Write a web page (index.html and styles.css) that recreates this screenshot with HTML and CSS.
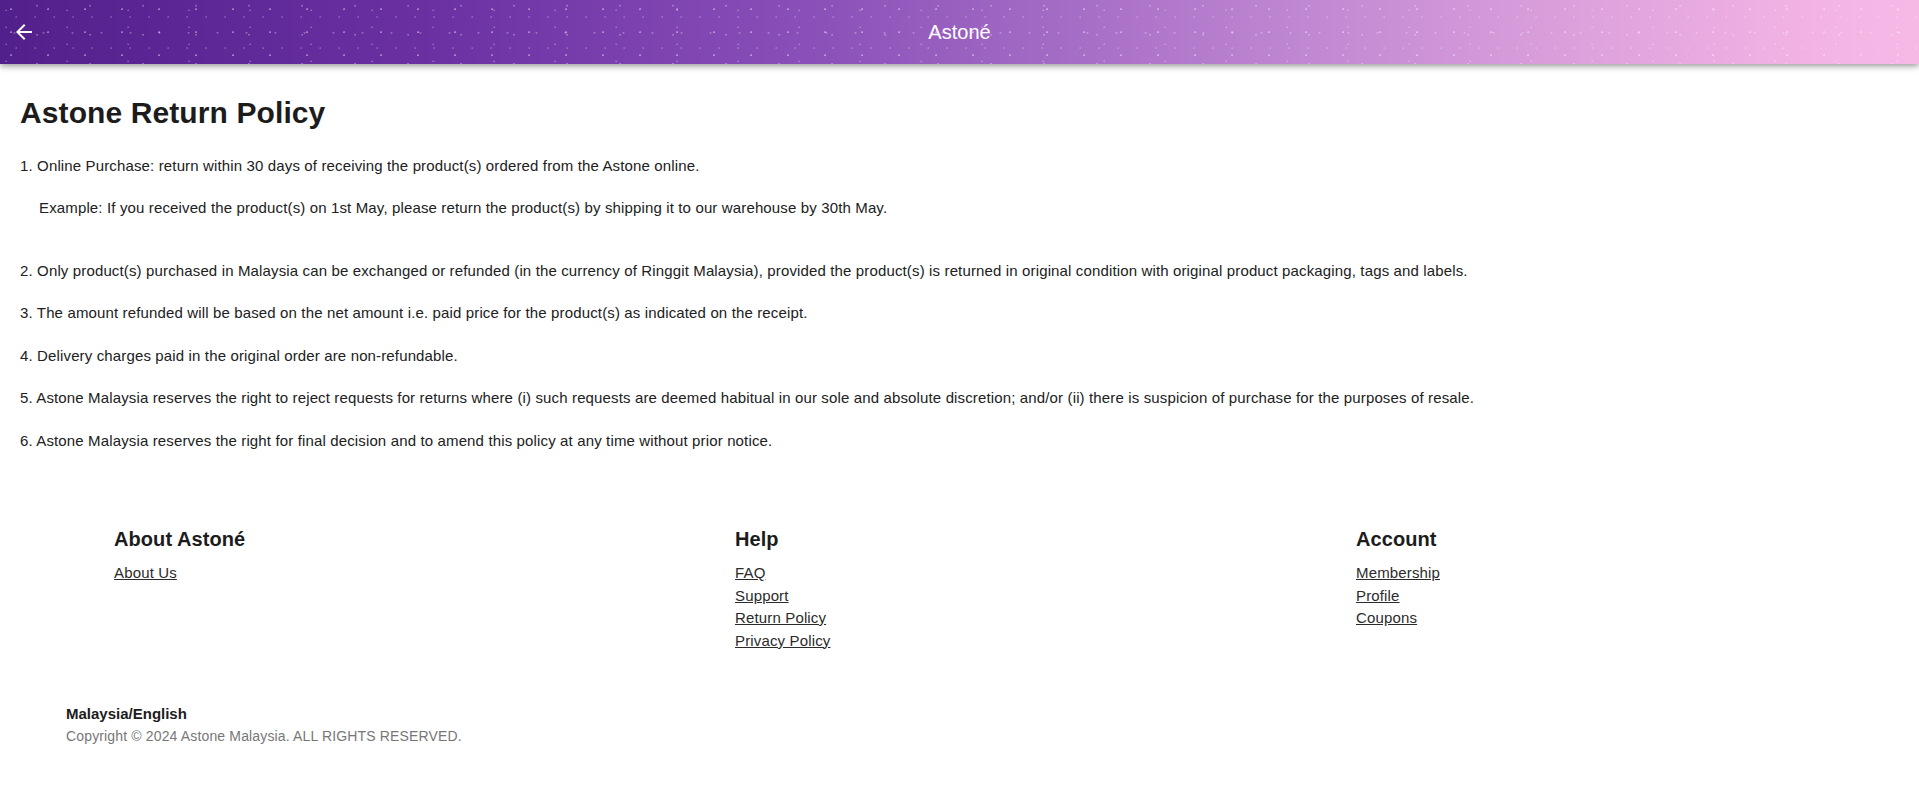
FILE: index.html
```html
<!DOCTYPE html>
<html lang="en">
<head>
<meta charset="utf-8">
<title>Astone Return Policy</title>
<link rel="stylesheet" href="styles.css">
</head>
<body>
<header class="appbar">
  <div class="appbar-left">
    <button class="back-btn" aria-label="Back">
      <svg viewBox="0 0 24 24" width="24" height="24"><path fill="#fff" d="M20 11H7.83l5.59-5.59L12 4l-8 8 8 8 1.41-1.41L7.83 13H20v-2z"/></svg>
    </button>
  </div>
  <div class="appbar-title">Astoné</div>
  <div class="appbar-right"></div>
</header>

<main class="policy">
  <h1 class="policy-title">Astone Return Policy</h1>
  <p class="policy-item">1. Online Purchase: return within 30 days of receiving the product(s) ordered from the Astone online.</p>
  <p class="policy-item policy-example">Example: If you received the product(s) on 1st May, please return the product(s) by shipping it to our warehouse by 30th May.</p>
  <p class="policy-item">2. Only product(s) purchased in Malaysia can be exchanged or refunded (in the currency of Ringgit Malaysia), provided the product(s) is returned in original condition with original product packaging, tags and labels.</p>
  <p class="policy-item">3. The amount refunded will be based on the net amount i.e. paid price for the product(s) as indicated on the receipt.</p>
  <p class="policy-item">4. Delivery charges paid in the original order are non-refundable.</p>
  <p class="policy-item">5. Astone Malaysia reserves the right to reject requests for returns where (i) such requests are deemed habitual in our sole and absolute discretion; and/or (ii) there is suspicion of purchase for the purposes of resale.</p>
  <p class="policy-item">6. Astone Malaysia reserves the right for final decision and to amend this policy at any time without prior notice.</p>
</main>

<footer class="site-footer">
  <div class="footer-cols">
    <div class="footer-col">
      <h3 class="footer-heading">About Astoné</h3>
      <a class="footer-link" href="#">About Us</a>
    </div>
    <div class="footer-col">
      <h3 class="footer-heading">Help</h3>
      <a class="footer-link" href="#">FAQ</a>
      <a class="footer-link" href="#">Support</a>
      <a class="footer-link" href="#">Return Policy</a>
      <a class="footer-link" href="#">Privacy Policy</a>
    </div>
    <div class="footer-col">
      <h3 class="footer-heading">Account</h3>
      <a class="footer-link" href="#">Membership</a>
      <a class="footer-link" href="#">Profile</a>
      <a class="footer-link" href="#">Coupons</a>
    </div>
  </div>
  <div class="footer-bottom">
    <div class="footer-locale">Malaysia/English</div>
    <div class="footer-copy">Copyright © 2024 Astone Malaysia. ALL RIGHTS RESERVED.</div>
  </div>
</footer>
</body>
</html>
```

FILE: styles.css
```css
* { box-sizing: border-box; }

html, body {
  margin: 0;
  padding: 0;
  background: #fff;
}

body {
  font-family: "Liberation Sans", Arial, sans-serif;
  color: #212121;
  font-size: 15px;
}

.appbar {
  height: 64px;
  display: grid;
  grid-template-columns: 1fr auto 1fr;
  align-items: center;
  padding: 0 12px;
  box-shadow: 0 2px 4px -1px rgba(0,0,0,0.2), 0 4px 5px 0 rgba(0,0,0,0.14), 0 1px 10px 0 rgba(0,0,0,0.12);
  position: relative;
  z-index: 2;
  background-color: #7b3fae;
  background-image:
    radial-gradient(circle at 30% 40%, rgba(255,255,255,0.4) 0 0.7px, transparent 1.2px),
    radial-gradient(circle at 70% 20%, rgba(255,255,255,0.32) 0 0.6px, transparent 1.1px),
    radial-gradient(circle at 50% 80%, rgba(255,255,255,0.26) 0 0.8px, transparent 1.3px),
    radial-gradient(circle at 10% 60%, rgba(255,255,255,0.3) 0 0.5px, transparent 1px),
    radial-gradient(circle at 85% 55%, rgba(255,255,255,0.22) 0 0.6px, transparent 1.1px),
    linear-gradient(90deg, #52208b 0%, #6a30a2 22%, #8a4fb8 42%, #a46bc5 55%, #c088d2 68%, #dca0dc 82%, #f2b3e3 94%, #f6b9e6 100%);
  background-size: 37px 23px, 53px 29px, 29px 41px, 61px 17px, 19px 31px, 100% 100%;
}

.appbar-left {
  display: flex;
  align-items: center;
}

.back-btn {
  display: flex;
  align-items: center;
  justify-content: center;
  width: 24px;
  height: 24px;
  padding: 0;
  border: 0;
  background: transparent;
  cursor: pointer;
}

.back-btn svg { display: block; }

.appbar-title {
  color: #fff;
  font-size: 20px;
  line-height: 24px;
}

.policy {
  padding: 32px 20px 0;
}

.policy-title {
  margin: 0 0 24px;
  font-size: 30px;
  line-height: 34.5px;
  font-weight: bold;
  letter-spacing: 0.1px;
  color: #1c1c1c;
}

.policy-item {
  margin: 0 0 20px;
  line-height: 22.5px;
  font-size: 15px;
  letter-spacing: 0.14px;
  color: #212121;
}

.policy-example {
  padding-left: 19px;
  margin-bottom: 40px;
}

.site-footer {
  padding-top: 55px;
}

.footer-cols {
  display: grid;
  grid-template-columns: 621px 621px 1fr;
  padding-left: 114px;
}

.footer-col {
  display: flex;
  flex-direction: column;
  align-items: flex-start;
}

.footer-heading {
  margin: 0 0 11px;
  font-size: 20px;
  line-height: 24px;
  font-weight: bold;
  letter-spacing: 0.08px;
  color: #1c1c1c;
}

.footer-link {
  display: block;
  font-size: 15px;
  line-height: 22.5px;
  letter-spacing: 0.15px;
  color: #2b2b2b;
  text-decoration: underline;
}

.footer-bottom {
  margin-top: 52px;
  padding-left: 66px;
  padding-bottom: 40px;
}

.footer-locale {
  font-size: 15px;
  line-height: 20px;
  font-weight: bold;
  color: #1c1c1c;
}

.footer-copy {
  margin-top: 3px;
  font-size: 14px;
  line-height: 18px;
  letter-spacing: 0.15px;
  color: #777;
}
```
